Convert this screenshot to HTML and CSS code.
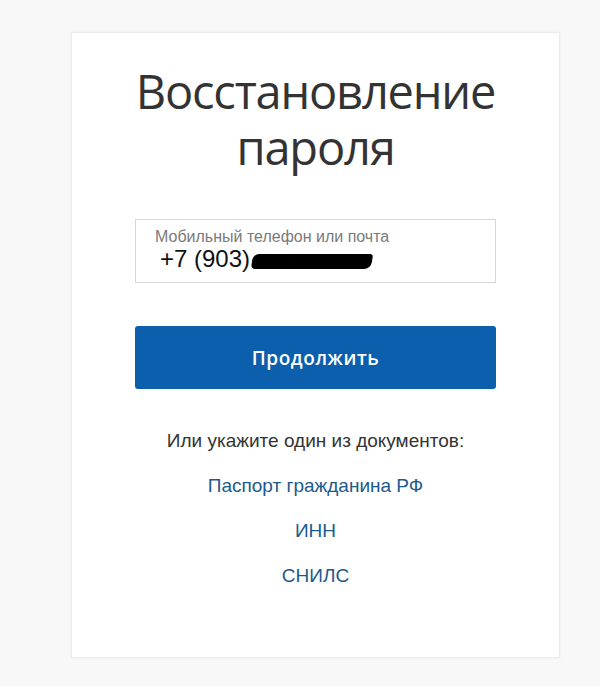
FILE: index.html
```html
<!DOCTYPE html>
<html lang="ru">
<head>
<meta charset="utf-8">
<link rel="stylesheet" href="styles.css">
</head>
<body>
<div class="card">
  <h1 class="title"><span class="title-line">Восстановление</span><span class="title-line">пароля</span></h1>
  <div class="field">
    <div class="field-label">Мобильный телефон или почта</div>
    <div class="field-value">+7 (903)<span class="redact"></span></div>
  </div>
  <button class="btn">Продолжить</button>
  <p class="alt">Или укажите один из документов:</p>
  <a class="doc" href="#">Паспорт гражданина РФ</a>
  <a class="doc" href="#">ИНН</a>
  <a class="doc" href="#">СНИЛС</a>
</div>
</body>
</html>
```
FILE: styles.css
```css
html, body { margin: 0; padding: 0; }
body {
  background: #f8f8f8;
  font-family: "Liberation Sans", Arial, sans-serif;
  width: 600px;
  height: 686px;
  overflow: hidden;
}
.card {
  box-sizing: border-box;
  margin: 32px 0 0 71px;
  width: 489px;
  height: 626px;
  background: #fff;
  border: 1px solid #ececec;
  box-shadow: 0 0 3px rgba(0,0,0,0.06);
  padding: 30px 63px 0 63px;
  display: flex;
  flex-direction: column;
  align-items: stretch;
}
.title {
  margin: 0;
  font-family: "Open Sans", sans-serif;
  font-weight: 400;
  font-size: 47px;
  line-height: 56px;
  color: #333;
  text-align: center;
  letter-spacing: -1.2px;
  white-space: nowrap;
}
.title-line {
  display: block;
}
.field {
  margin-top: 44px;
  box-sizing: border-box;
  height: 64px;
  border: 1px solid #d6d6d6;
  padding: 8px 0 0 19px;
}
.field-label {
  font-size: 16px;
  line-height: 18px;
  color: #7a7a7a;
}
.field-value {
  font-size: 24px;
  line-height: 26px;
  color: #111;
  padding-left: 5px;
  display: flex;
  align-items: center;
}
.redact {
  display: inline-block;
  width: 120px;
  height: 15px;
  margin-left: 2px;
  margin-top: 5px;
  background: #000;
  border-radius: 6px 3px 7px 4px;
  transform: skewX(-8deg);
}
.btn {
  margin-top: 43px;
  height: 63px;
  border: 0;
  border-radius: 3px;
  background: #0c5fad;
  color: #fff;
  font-family: "Open Sans", sans-serif;
  font-size: 19px;
  font-weight: 600;
  letter-spacing: 0.6px;
}
.alt {
  margin: 42px 0 0;
  text-align: center;
  font-size: 19px;
  line-height: 20px;
  color: #333;
}
.doc {
  display: block;
  margin-top: 25px;
  text-align: center;
  font-size: 19px;
  line-height: 20px;
  color: #1d5a8c;
  text-decoration: none;
}
```
